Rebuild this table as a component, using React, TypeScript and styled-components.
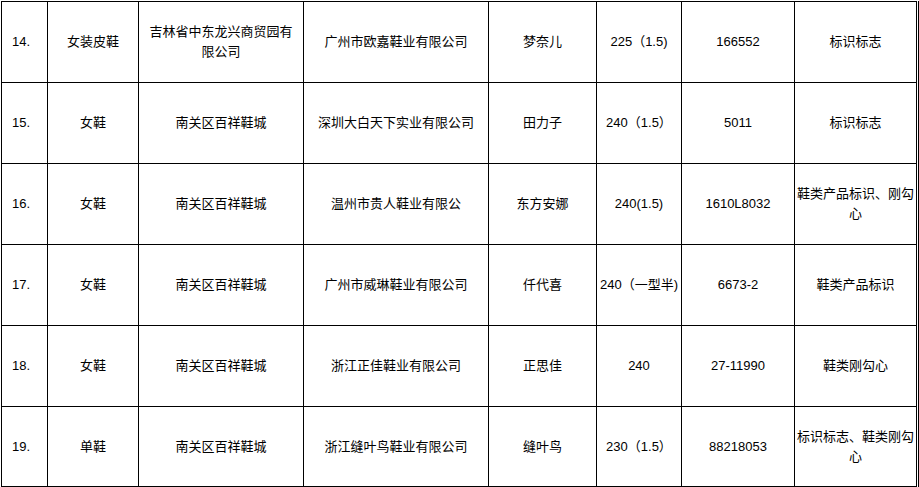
import React from "react";
import styled, { createGlobalStyle } from "styled-components";

const Global = createGlobalStyle`
  html, body { margin: 0; padding: 0; background: #fff; }
  body {
    font-family: "Liberation Sans", "Noto Sans CJK SC", sans-serif;
    color: #000;
  }
`;

const Frame = styled.div`
  display: inline-block;
  margin: 1px 0 0 1px;
  padding-right: 1px;
  border-right: 1px solid #000;
`;

const Table = styled.table`
  border-collapse: collapse;
  table-layout: fixed;
  width: 915px;
  font-size: 13px;
  line-height: 20px;
`;

const Row = styled.tr`
  height: 81px;
  &:last-child { height: 80px; }
`;

type Kind = "index" | "text" | "tight";

const pad: Record<Kind, string> = {
  index: "0 0 0 10px",
  text: "0 5px",
  tight: "0 1px",
};

const Cell = styled.td<{ $kind: Kind }>`
  border: 1px solid #000;
  padding: ${(p) => pad[p.$kind]};
  text-align: ${(p) => (p.$kind === "index" ? "left" : "center")};
  vertical-align: middle;
  word-break: break-all;
  overflow: hidden;
`;

const widths = [46, 91, 165, 185, 108, 85, 113, 122];

const rows = [
  ["14.", "女装皮鞋", "吉林省中东龙兴商贸园有限公司", "广州市欧嘉鞋业有限公司", "梦奈儿", "225（1.5)", "166552", "标识标志"],
  ["15.", "女鞋", "南关区百祥鞋城", "深圳大白天下实业有限公司", "田力子", "240（1.5）", "5011", "标识标志"],
  ["16.", "女鞋", "南关区百祥鞋城", "温州市贵人鞋业有限公", "东方安娜", "240(1.5)", "1610L8032", "鞋类产品标识、刚勾心"],
  ["17.", "女鞋", "南关区百祥鞋城", "广州市威琳鞋业有限公司", "仟代喜", "240（一型半)", "6673-2", "鞋类产品标识"],
  ["18.", "女鞋", "南关区百祥鞋城", "浙江正佳鞋业有限公司", "正思佳", "240", "27-11990", "鞋类刚勾心"],
  ["19.", "单鞋", "南关区百祥鞋城", "浙江缝叶鸟鞋业有限公司", "缝叶鸟", "230（1.5）", "88218053", "标识标志、鞋类刚勾心"],
];

const kindOf = (j: number): Kind => (j === 0 ? "index" : j === 5 || j === 7 ? "tight" : "text");

export default function App() {
  return (
    <>
      <Global />
      <Frame>
        <Table>
          <colgroup>
            {widths.map((w, i) => (
              <col key={i} style={{ width: w }} />
            ))}
          </colgroup>
          <tbody>
            {rows.map((r, i) => (
              <Row key={i}>
                {r.map((c, j) => (
                  <Cell key={j} $kind={kindOf(j)}>
                    {c}
                  </Cell>
                ))}
              </Row>
            ))}
          </tbody>
        </Table>
      </Frame>
    </>
  );
}
